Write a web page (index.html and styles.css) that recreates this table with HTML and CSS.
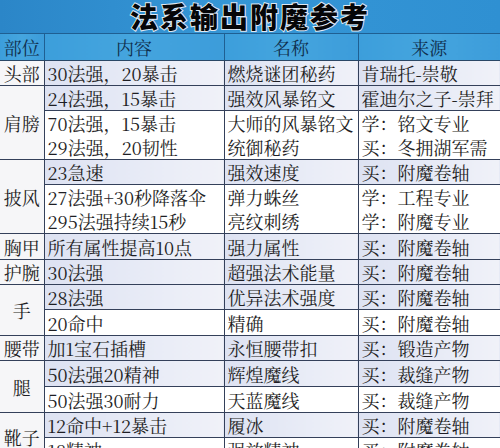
FILE: index.html
```html
<!DOCTYPE html>
<html lang="zh-CN">
<head>
<meta charset="utf-8">
<title>法系输出附魔参考</title>
<link rel="stylesheet" href="styles.css">
</head>
<body>
<div class="page">
  <h1 class="title">法系输出附魔参考</h1>
  <table class="grid">
    <colgroup>
      <col class="c-slot"><col class="c-stat"><col class="c-name"><col class="c-src">
    </colgroup>
    <thead>
      <tr class="head"><th>部位</th><th>内容</th><th>名称</th><th>来源</th></tr>
    </thead>
    <tbody>
      <tr class="shade"><td class="slot">头部</td><td>30法强，20暴击</td><td>燃烧谜团秘药</td><td>肯瑞托-崇敬</td></tr>
      <tr class="shade"><td class="slot" rowspan="3">肩膀</td><td>24法强，15暴击</td><td>强效风暴铭文</td><td>霍迪尔之子-崇拜</td></tr>
      <tr class="plain"><td>70法强，15暴击</td><td>大师的风暴铭文</td><td>学：铭文专业</td></tr>
      <tr class="plain"><td>29法强，20韧性</td><td>统御秘药</td><td>买：冬拥湖军需</td></tr>
      <tr class="shade"><td class="slot" rowspan="3">披风</td><td>23急速</td><td>强效速度</td><td>买：附魔卷轴</td></tr>
      <tr class="plain"><td>27法强+30秒降落伞</td><td>弹力蛛丝</td><td>学：工程专业</td></tr>
      <tr class="plain"><td>295法强持续15秒</td><td>亮纹刺绣</td><td>学：附魔专业</td></tr>
      <tr class="shade tall"><td class="slot">胸甲</td><td>所有属性提高10点</td><td>强力属性</td><td>买：附魔卷轴</td></tr>
      <tr class="shade"><td class="slot">护腕</td><td>30法强</td><td>超强法术能量</td><td>买：附魔卷轴</td></tr>
      <tr class="shade"><td class="slot" rowspan="2">手</td><td>28法强</td><td>优异法术强度</td><td>买：附魔卷轴</td></tr>
      <tr class="plain tall"><td>20命中</td><td>精确</td><td>买：附魔卷轴</td></tr>
      <tr class="shade"><td class="slot">腰带</td><td>加1宝石插槽</td><td>永恒腰带扣</td><td>买：锻造产物</td></tr>
      <tr class="shade tall"><td class="slot" rowspan="2">腿</td><td>50法强20精神</td><td>辉煌魔线</td><td>买：裁缝产物</td></tr>
      <tr class="plain tall"><td>50法强30耐力</td><td>天蓝魔线</td><td>买：裁缝产物</td></tr>
      <tr class="shade"><td class="slot" rowspan="2">靴子</td><td>12命中+12暴击</td><td>履冰</td><td>买：附魔卷轴</td></tr>
      <tr class="plain"><td>18精神</td><td>强效精神</td><td>买：附魔卷轴</td></tr>
    </tbody>
  </table>
</div>
</body>
</html>
```
FILE: styles.css
```css
html, body {
  margin: 0;
  padding: 0;
  background: #ffffff;
}
.page {
  width: 500px;
  height: 448px;
  overflow: hidden;
  font-family: "Noto Serif CJK SC", "Liberation Serif", "Noto Sans CJK SC", serif;
  color: #1e1e24;
}
.title {
  margin: 0;
  height: 33px;
  line-height: 33px;
  text-align: center;
  font-family: "Noto Sans CJK SC", sans-serif;
  font-weight: 900;
  font-size: 28px;
  letter-spacing: 2px;
  color: #050608;
  -webkit-text-stroke: 2px #dfe8f2;
  paint-order: stroke fill;
  background: linear-gradient(to right, #2b86c8 0%, #3596d6 45%, #2f90d2 100%);
}
.grid {
  width: 500px;
  table-layout: fixed;
  border-collapse: collapse;
  font-size: 18px;
  line-height: 1;
}
.c-slot { width: 44px; }
.c-stat { width: 180px; }
.c-name { width: 134px; }
.c-src { width: 142px; }
.grid th, .grid td {
  height: 24px;
  padding: 0 0 0 3px;
  white-space: nowrap;
  overflow: visible;
  text-align: left;
  font-weight: 400;
  border-left: 1.5px solid #34405a;
}
.grid tr.tall td {
  height: 25px;
}
.grid th:first-child, .grid td.slot {
  border-left: 0;
}
.head th {
  height: 26px;
  text-align: center;
  padding: 0;
  color: #10304e;
  background: linear-gradient(to right, #3c9edb, #45a5de 50%, #3c9cda);
  border-top: 1.5px solid #1f5f92;
  border-left-color: #1f5f92;
  border-bottom: 1.5px solid #2a4766;
}
.grid td.slot {
  text-align: center;
  padding: 0;
  background: #f6f6f8;
  border-top: 1.5px solid #34405a;
  border-bottom: 1.5px solid #34405a;
}
.shade td {
  background: linear-gradient(to right, #dde2f2, #eaedf7 70%, #f0f1f8);
  border-top: 1.5px solid #34405a;
  border-bottom: 1.5px solid #34405a;
}
.plain td {
  background: #ffffff;
}
```
